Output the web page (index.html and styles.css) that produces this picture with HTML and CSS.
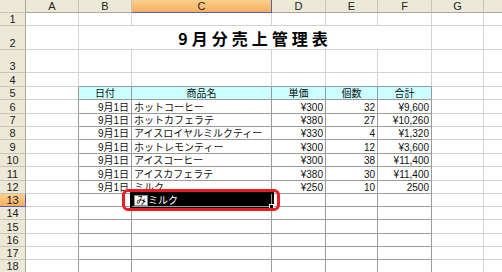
FILE: index.html
```html
<!DOCTYPE html>
<html lang="ja">
<head>
    <meta charset="UTF-8">
    <title>9月分売上管理表</title>
    <link rel="stylesheet" href="styles.css">
</head>
<body>
    <div class="sheet">
        <table class="grid">
            <colgroup>
                <col style="width:26px">
                <col style="width:53px">
                <col style="width:53px">
                <col style="width:140px">
                <col style="width:54px">
                <col style="width:52px">
                <col style="width:54px">
                <col style="width:52px">
                <col style="width:40px">
            </colgroup>
            <tr class="colhead">
                <th class="corner"></th>
                <th class="col">A</th>
                <th class="col">B</th>
                <th class="col sel">C</th>
                <th class="col">D</th>
                <th class="col">E</th>
                <th class="col">F</th>
                <th class="col">G</th>
                <th class="col"></th>
            </tr>
            <tr>
                <th class="row">1</th>
                <td></td><td></td><td></td><td></td><td></td><td></td><td></td><td></td>
            </tr>
            <tr class="r2">
                <th class="row">2</th>
                <td></td>
                <td class="title" colspan="5">9月分売上管理表</td>
                <td></td><td></td>
            </tr>
            <tr class="r3">
                <th class="row">3</th>
                <td></td><td></td><td></td><td></td><td></td><td></td><td></td><td></td>
            </tr>
            <tr class="tall">
                <th class="row">4</th>
                <td></td>
                <td class="above"></td><td class="above"></td><td class="above"></td><td class="above"></td><td class="above"></td>
                <td></td><td></td>
            </tr>
            <tr>
                <th class="row">5</th>
                <td class="lft"></td>
                <td class="b hd">日付</td>
                <td class="b hd">商品名</td>
                <td class="b hd">単価</td>
                <td class="b hd">個数</td>
                <td class="b hd">合計</td>
                <td></td><td></td>
            </tr>
            <tr class="tall">
                <th class="row">6</th>
                <td class="lft"></td>
                <td class="b num">9月1日</td>
                <td class="b">ホットコーヒー</td>
                <td class="b num">¥300</td>
                <td class="b num">32</td>
                <td class="b num">¥9,600</td>
                <td></td><td></td>
            </tr>
            <tr>
                <th class="row">7</th>
                <td class="lft"></td>
                <td class="b num">9月1日</td>
                <td class="b">ホットカフェラテ</td>
                <td class="b num">¥380</td>
                <td class="b num">27</td>
                <td class="b num">¥10,260</td>
                <td></td><td></td>
            </tr>
            <tr>
                <th class="row">8</th>
                <td class="lft"></td>
                <td class="b num">9月1日</td>
                <td class="b">アイスロイヤルミルクティー</td>
                <td class="b num">¥330</td>
                <td class="b num">4</td>
                <td class="b num">¥1,320</td>
                <td></td><td></td>
            </tr>
            <tr class="tall">
                <th class="row">9</th>
                <td class="lft"></td>
                <td class="b num">9月1日</td>
                <td class="b">ホットレモンティー</td>
                <td class="b num">¥300</td>
                <td class="b num">12</td>
                <td class="b num">¥3,600</td>
                <td></td><td></td>
            </tr>
            <tr>
                <th class="row">10</th>
                <td class="lft"></td>
                <td class="b num">9月1日</td>
                <td class="b">アイスコーヒー</td>
                <td class="b num">¥300</td>
                <td class="b num">38</td>
                <td class="b num">¥11,400</td>
                <td></td><td></td>
            </tr>
            <tr class="tall">
                <th class="row">11</th>
                <td class="lft"></td>
                <td class="b num">9月1日</td>
                <td class="b">アイスカフェラテ</td>
                <td class="b num">¥380</td>
                <td class="b num">30</td>
                <td class="b num">¥11,400</td>
                <td></td><td></td>
            </tr>
            <tr>
                <th class="row">12</th>
                <td class="lft"></td>
                <td class="b num">9月1日</td>
                <td class="b">ミルク</td>
                <td class="b num">¥250</td>
                <td class="b num">10</td>
                <td class="b num">2500</td>
                <td></td><td></td>
            </tr>
            <tr>
                <th class="row sel">13</th>
                <td class="lft"></td>
                <td class="b"></td>
                <td class="b active"><span class="ime">み</span>ミルク<span class="handle"></span></td>
                <td class="b"></td><td class="b"></td><td class="b"></td>
                <td></td><td></td>
            </tr>
            <tr>
                <th class="row">14</th>
                <td class="lft"></td>
                <td class="b"></td><td class="b"></td><td class="b"></td><td class="b"></td><td class="b"></td>
                <td></td><td></td>
            </tr>
            <tr class="tall">
                <th class="row">15</th>
                <td class="lft"></td>
                <td class="b"></td><td class="b"></td><td class="b"></td><td class="b"></td><td class="b"></td>
                <td></td><td></td>
            </tr>
            <tr>
                <th class="row">16</th>
                <td class="lft"></td>
                <td class="b"></td><td class="b"></td><td class="b"></td><td class="b"></td><td class="b"></td>
                <td></td><td></td>
            </tr>
            <tr>
                <th class="row">17</th>
                <td class="lft"></td>
                <td class="b"></td><td class="b"></td><td class="b"></td><td class="b"></td><td class="b"></td>
                <td></td><td></td>
            </tr>
            <tr>
                <th class="row">18</th>
                <td class="lft"></td>
                <td class="b"></td><td class="b"></td><td class="b"></td><td class="b"></td><td class="b"></td>
                <td></td><td></td>
            </tr>
        </table>
        <!-- red marker round the autocomplete cell -->
        <div class="marker"></div>
    </div>
</body>
</html>
```

FILE: styles.css
```css
body {
    margin: 0;
    background: #fff;
    overflow: hidden;
    font-family: "Liberation Sans", "Noto Sans CJK JP", sans-serif;
}
.sheet {
    position: relative;
}
.grid {
    border-collapse: separate;
    border-spacing: 0;
    table-layout: fixed;
    width: 524px;
}
.grid tr {
    height: 13px;
}
.grid tr.tall {
    height: 14px;
}
.grid tr.r2 {
    height: 24px;
}
.grid tr.r3 {
    height: 23px;
}
.grid td {
    padding: 0 2px;
    border-right: 1px solid #d2d2d2;
    border-bottom: 1px solid #d2d2d2;
    font-size: 10px;
    line-height: 11px;
    color: #111;
    vertical-align: bottom;
    white-space: nowrap;
    overflow: hidden;
}

/* headers */
.grid th {
    padding: 0;
    background: #ece9d8;
    border-right: 1px solid #aca899;
    border-bottom: 1px solid #c9c5b4;
    font-size: 11px;
    font-weight: normal;
    line-height: 11px;
    color: #222;
    text-align: center;
    vertical-align: bottom;
}
.grid th.col {
    border-bottom-color: #aca899;
    border-right-color: #c9c5b4;
    vertical-align: middle;
}
.grid th.row {
    border-right-color: #aca899;
}
.grid th.sel {
    background: linear-gradient(#fbcf8f, #f6b060);
    border-right-color: #5b5fae;
    border-bottom-color: #5b5fae;
}

/* title */
.grid td.title {
    font-family: "Noto Sans CJK JP", sans-serif;
    font-size: 16px;
    font-weight: bold;
    letter-spacing: 4px;
    line-height: 20px;
    text-align: center;
    color: #000;
    padding-bottom: 1px;
}

/* bordered table B5:F18 */
.grid td.b {
    border-right-color: #9a9a9a;
    border-bottom-color: #9a9a9a;
}
.grid td.above {
    border-bottom-color: #9a9a9a;
}
.grid td.lft {
    border-right-color: #9a9a9a;
}
.grid td.hd {
    background: #ccffff;
    text-align: center;
}
.grid td.num {
    text-align: right;
}

/* cell in edit mode */
.grid td.active {
    position: relative;
    background: #000;
    color: #fff;
    outline: 2px solid #000;
    overflow: visible;
}
.ime {
    display: inline-block;
    background: #fff;
    color: #000;
    border: 1px solid #8a8a8a;
    padding: 0 1px;
    line-height: 9px;
}
.handle {
    position: absolute;
    right: -3px;
    bottom: -3px;
    width: 3px;
    height: 3px;
    background: #000;
    border: 1px solid #fff;
}

.marker {
    position: absolute;
    left: 122px;
    top: 189px;
    width: 158px;
    height: 22px;
    box-sizing: border-box;
    border: 3px solid #ec1c24;
    border-radius: 6px;
}
```
